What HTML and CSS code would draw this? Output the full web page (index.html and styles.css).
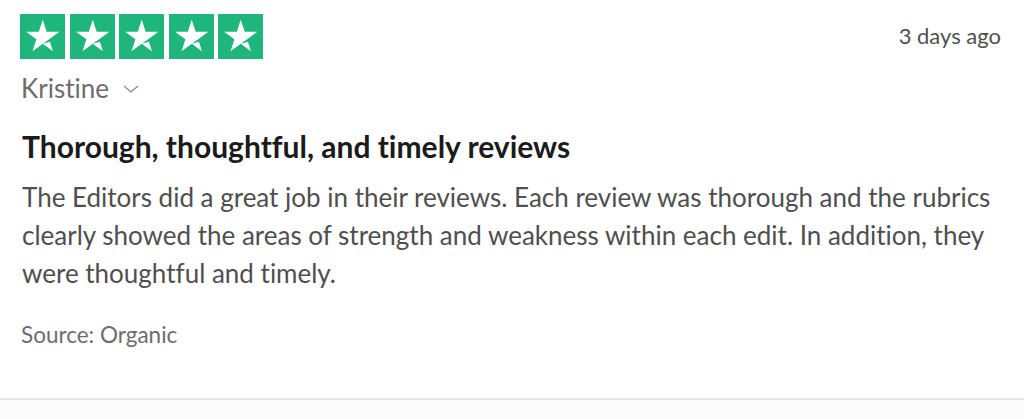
FILE: index.html
```html
<!DOCTYPE html>
<html lang="en">
<head>
<meta charset="utf-8">
<title>Review</title>
<link rel="stylesheet" href="styles.css">
</head>
<body>
<article class="review">
  <header class="review-top">
    <div class="stars" aria-label="Rated 5 out of 5 stars">
      <span class="star"><svg viewBox="0 0 96 96"><path fill="#fff" d="M48.5 63.3l15.4-3.9 6.4 19.8-21.8-15.9zm35.5-25.6H56.9L48.5 12l-8.4 25.7H13l22 15.9-8.4 25.7 22-15.9 13.5-9.7L84 37.7z"/></svg></span>
      <span class="star"><svg viewBox="0 0 96 96"><path fill="#fff" d="M48.5 63.3l15.4-3.9 6.4 19.8-21.8-15.9zm35.5-25.6H56.9L48.5 12l-8.4 25.7H13l22 15.9-8.4 25.7 22-15.9 13.5-9.7L84 37.7z"/></svg></span>
      <span class="star"><svg viewBox="0 0 96 96"><path fill="#fff" d="M48.5 63.3l15.4-3.9 6.4 19.8-21.8-15.9zm35.5-25.6H56.9L48.5 12l-8.4 25.7H13l22 15.9-8.4 25.7 22-15.9 13.5-9.7L84 37.7z"/></svg></span>
      <span class="star"><svg viewBox="0 0 96 96"><path fill="#fff" d="M48.5 63.3l15.4-3.9 6.4 19.8-21.8-15.9zm35.5-25.6H56.9L48.5 12l-8.4 25.7H13l22 15.9-8.4 25.7 22-15.9 13.5-9.7L84 37.7z"/></svg></span>
      <span class="star"><svg viewBox="0 0 96 96"><path fill="#fff" d="M48.5 63.3l15.4-3.9 6.4 19.8-21.8-15.9zm35.5-25.6H56.9L48.5 12l-8.4 25.7H13l22 15.9-8.4 25.7 22-15.9 13.5-9.7L84 37.7z"/></svg></span>
    </div>
    <time class="date">3 days ago</time>
  </header>
  <div class="author">Kristine <svg class="chev" viewBox="0 0 16 8"><path d="M1 1 8 7l7-6" fill="none" stroke="#8a8a8a" stroke-width="1.3"/></svg></div>
  <h2 class="title">Thorough, thoughtful, and timely reviews</h2>
  <p class="body">The Editors did a great job in their reviews. Each review was thorough and the rubrics clearly showed the areas of strength and weakness within each edit. In addition, they were thoughtful and timely.</p>
  <div class="source">Source: Organic</div>
</article>
</body>
</html>
```
FILE: styles.css
```css
html, body {
  margin: 0;
  padding: 0;
  background: #fbfbfb;
}
body {
  font-family: Lato, "Liberation Sans", sans-serif;
  font-variant-ligatures: none;
}
.review {
  background: #fff;
  height: 400px;
  box-sizing: border-box;
  padding: 14px 20px 0 20px;
  border-bottom: 2px solid #e6e6e6;
}
.review-top {
  display: flex;
  justify-content: space-between;
  align-items: flex-start;
  padding-right: 3px;
}
.stars {
  display: flex;
  gap: 4.5px;
}
.star {
  width: 45px;
  height: 45px;
  background: #1eb67b;
  display: block;
}
.star svg {
  width: 45px;
  height: 45px;
  display: block;
}
.date {
  font-size: 22px;
  color: #4f4f4f;
  margin-top: 8px;
}
.author {
  margin-top: 13px;
  font-size: 26px;
  line-height: 32px;
  height: 32px;
  color: #6d6d6d;
  display: flex;
  align-items: center;
  gap: 14px;
  padding-left: 1px;
}
.chev {
  width: 16px;
  height: 8px;
  margin-top: 2px;
}
.title {
  margin: 24px 0 0 2px;
  font-size: 30px;
  font-weight: 700;
  color: #1b1b1b;
  line-height: 36px;
}
.body {
  margin: 14px 0 0 2px;
  font-size: 26px;
  line-height: 38px;
  color: #4f4f4f;
}
.source {
  margin: 29px 0 0 1px;
  font-size: 22.5px;
  line-height: 27px;
  color: #6d6d6d;
}
```
